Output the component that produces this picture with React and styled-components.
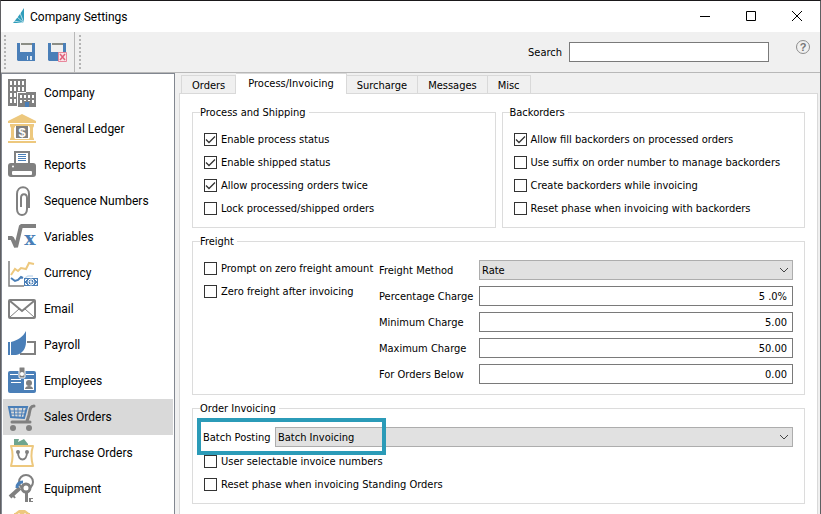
import React from 'react'
import styled, { createGlobalStyle, css } from 'styled-components'

const GlobalStyle = createGlobalStyle`
  * {
    box-sizing: border-box;
  }
  body {
    margin: 0;
    overflow: hidden;
    color: #000;
    font: 11px/15px 'DejaVu Sans Condensed', 'DejaVu Sans', sans-serif;
  }
  input, select, button {
    font: inherit;
    color: inherit;
    margin: 0;
  }
  label, legend {
    white-space: nowrap;
  }
`

const uiFont = css`
  font-family: Roboto, 'Noto Sans', sans-serif;
  font-size: 12px;
  line-height: 16px;
`

const Window = styled.div`
  display: flex;
  flex-direction: column;
  height: 100vh;
  background: #f0f0f0;
  border: 1px solid #5f5f62;
  border-top-color: #1a181a;
  border-bottom: 0;
`

const TitleBar = styled.header`
  ${uiFont}
  display: flex;
  flex: none;
  align-items: center;
  gap: 4px;
  height: 31px;
  padding-left: 12px;
  background: #fff;

  h1 {
    flex: 1;
    margin: 0;
    font-size: 12px;
    font-weight: 400;
  }
`

const Controls = styled.div`
  display: flex;
`

const ControlButton = styled.button`
  display: grid;
  place-items: center;
  width: 46px;
  height: 28px;
  padding: 0;
  border: 0;
  background: none;
`

const ToolBar = styled.div`
  display: flex;
  flex: none;
  align-items: stretch;
  height: 41px;
  border-bottom: 1px solid #b8b8b8;
`

const ToolGroup = styled.div`
  display: flex;
  align-items: center;
  gap: 11px;
  padding: 0 6px 0 3px;
  border-right: 1px solid #b8b8b8;
`

const Grip = styled.span`
  align-self: center;
  width: 2px;
  height: 34px;
  background: repeating-linear-gradient(#b4b4b4 0 2px, transparent 2px 4px);
`

const ToolButton = styled.button`
  display: flex;
  width: 20px;
  padding: 0;
  border: 0;
  background: none;
`

const SearchArea = styled.div`
  display: flex;
  flex: 1;
  align-items: center;
  justify-content: flex-end;
  gap: 7px;
  padding: 0 9px 0 4px;

  ${Grip} {
    margin-right: auto;
  }
`

const HelpButton = styled(ToolButton)`
  align-self: flex-start;
  width: 16px;
  margin: 7px 0 0 19px;
`

const fieldBox = css`
  height: 20px;
  border: 1px solid #7a7a7a;
  border-radius: 0;
  background: #fff;
`

const SearchInput = styled.input`
  ${fieldBox}
  width: 200px;
`

const Main = styled.div`
  display: flex;
  flex: 1;
  gap: 4px;
  min-height: 0;
`

const SideBar = styled.nav`
  ${uiFont}
  flex: none;
  width: 174px;
  padding: 1px 1px 0;
  overflow: hidden;
  background: #fff;
  border: 1px solid #828790;
  border-bottom: 0;
`

const SideItem = styled.a`
  display: flex;
  align-items: center;
  gap: 7px;
  height: 36px;
  padding-left: 4px;
  color: #000;
  text-decoration: none;
  background: ${props => (props.$selected ? '#d9d9d9' : 'none')};

  svg {
    flex: none;
    overflow: visible;
  }
`

const Content = styled.main`
  display: flex;
  flex: 1;
  flex-direction: column;
  min-width: 0;
  margin-right: 2px;
`

const TabList = styled.div`
  display: flex;
  flex: none;
  align-items: flex-end;
  height: 20px;
  padding-left: 2px;
`

const Tab = styled.button`
  height: 18px;
  padding: 1px 10px 0;
  border: 1px solid #d9d9d9;
  border-bottom: 0;
  border-left-width: ${props => (props.$first ? '1px' : 0)};
  background: #f0f0f0;

  &[aria-selected='true'] {
    z-index: 1;
    height: 21px;
    margin-bottom: -1px;
    padding: 0 12px 1px;
    background: #fff;
  }
`

const Panel = styled.div`
  display: flex;
  flex: 1;
  flex-direction: column;
  gap: 6px;
  min-height: 0;
  padding: 11px 12px 0;
  overflow: hidden;
  background: #fff;
  border: 1px solid #d9d9d9;
  border-bottom: 0;
`

const Columns = styled.div`
  display: grid;
  grid-template-columns: 1fr 1fr;
  gap: 6px;
`

const Group = styled.fieldset`
  min-width: 0;
  margin: 0;
  padding: 11px 11px 10px;
  border: 1px solid #dcdcdc;

  legend {
    height: 15px;
    margin-left: -4px;
    padding: 0 3px 0 0;
  }
`

const CheckList = styled.div`
  display: flex;
  flex-direction: column;
  gap: 8px;
  padding: 1px 0;
`

const CheckLabel = styled.label`
  display: flex;
  align-items: center;
  gap: 4px;
`

const Box = styled.span`
  position: relative;
  display: flex;

  input {
    appearance: none;
    width: 13px;
    height: 13px;
    border: 1px solid #333;
    background: #fff;
  }
  svg {
    position: absolute;
    inset: 0;
    visibility: hidden;
    pointer-events: none;
  }
  input:checked + svg {
    visibility: visible;
  }
`

const FreightLayout = styled.div`
  display: grid;
  grid-template-columns: 169px 1fr;
  gap: 6px;
  align-items: start;
`

const FormGrid = styled.div`
  display: grid;
  grid-template-columns: 94px 1fr;
  gap: 6px;
  align-items: center;
`

const NumberInput = styled.input`
  ${fieldBox}
  width: 100%;
  padding: 1px 5px 0;
  text-align: right;
`

const SelectBox = styled.span`
  position: relative;
  display: flex;

  select {
    appearance: none;
    width: 100%;
    height: 20px;
    padding: 1px 2px 0;
    border: 1px solid #adadad;
    border-radius: 0;
    background: #e1e1e1;
  }
  svg {
    position: absolute;
    top: 7px;
    right: 4px;
    pointer-events: none;
  }
`

const BatchRow = styled.div`
  position: relative;
  display: grid;
  grid-template-columns: 67px 1fr;
  gap: 5px;
  align-items: center;
  margin: 0 0 6px -1px;
`

// callout frame drawn over the batch posting row
const Highlight = styled.span`
  position: absolute;
  top: -9px;
  left: -6px;
  width: 189px;
  height: 37px;
  border: 4px solid #2b9bb8;
  pointer-events: none;
`

const GRAY = '#808080'
const BLUE = '#4a7fb8'
const GOLD = '#edc87e'

const Icon = ({ children }) => (
  <svg width="30" height="30" viewBox="0 0 30 30" fill="none" aria-hidden="true">
    {children}
  </svg>
)

const CompanyIcon = () => (
  <Icon>
    <path fill={GRAY} d="M1 1h18v13h10v15H10V28H1z" />
    <path
      fill="#fff"
      d="M3 3h2v4H3zM7 3h2v4H7zM11 3h2v4h-2zM15 3h2v4h-2zM3 9h2v4H3zM7 9h2v4H7zM11 9h2v4h-2zM15 9h2v4h-2zM3 15h2v4H3zM7 15h2v4H7zM3 21h2v4H3zM7 21h2v4H7zM10 14h9v1h-8v14h-1z"
    />
    <path
      fill="#fff"
      d="M13 17h2v3h-2zM17 17h2v3h-2zM21 17h2v3h-2zM25 17h2v3h-2zM13 22h2v3h-2zM25 22h2v3h-2zM17 22h2v1h-2zM21 22h2v1h-2z"
    />
    <path fill={BLUE} d="M18 24h4v5h-4z" />
  </Icon>
)

const LedgerIcon = () => (
  <Icon>
    <path
      fill={GOLD}
      d="M15 0l14 7v2H1V7zM3 10h24v2H3zM3 12h5v1l-1 1v9l1 2H3l1-2v-9zM22 12h5l-1 2v9l1 2h-5l1-2v-9zM3 25h24v1H3zM1 27h28v2H1z"
    />
    <path fill={GRAY} d="M9 12h12v12H9z" />
    <text x="15" y="23" fill="#fff" fontFamily="Liberation Sans" fontSize="13" fontWeight="700" textAnchor="middle">
      $
    </text>
  </Icon>
)

const ReportsIcon = () => (
  <Icon>
    <path stroke={GRAY} strokeWidth="2" d="M8 13V2h14v11" />
    <path stroke={BLUE} d="M11 4.500h8M11 6.500h8M11 8.500h8M11 10.500h8" />
    <rect x="1" y="13" width="28" height="14" rx="3" fill={GRAY} />
    <rect x="5" y="21" width="20" height="4" rx="1" fill="#fff" />
    <circle cx="6" cy="16.500" r="1" fill="#fff" />
  </Icon>
)

const ClipIcon = () => (
  <Icon>
    <path
      stroke={GRAY}
      strokeWidth="2"
      d="M22 22V8c0-9-12-9-12 0v15c0 8 10 8 10 0V12c0-5-6-5-6 0v9"
    />
  </Icon>
)

const VariablesIcon = () => (
  <Icon>
    <path stroke={GRAY} strokeWidth="4" strokeLinejoin="bevel" d="M1 16h4l4 9 5-21h15" />
    <text x="23" y="23" fill={BLUE} fontFamily="DejaVu Serif" fontSize="19" fontWeight="700" textAnchor="middle">
      x
    </text>
  </Icon>
)

const CurrencyIcon = () => (
  <Icon>
    <path stroke={GRAY} strokeWidth="1.500" d="M2 3v25h15" />
    <path stroke={GOLD} strokeWidth="2" d="M4 17l4-6 3 2 3-3 5 1 3-6 5 1" />
    <path stroke={BLUE} strokeWidth="2" d="M4 20l4 3 3-1 3-3 2 1" />
    <path stroke="#c9dcee" strokeWidth="1.500" d="M18 20l3-2h5" />
    <path fill={BLUE} d="M17 20h14v8H17z" />
    <path stroke="#fff" d="M20 21.500h-1.500v1.500M28 21.500h1.500v1.500M20 26.500h-1.500V25M28 26.500h1.500V25" />
    <circle cx="24" cy="24" r="3" stroke="#fff" />
    <path stroke="#fff" d="M25 23h-2v1h2v1h-2" />
  </Icon>
)

const EmailIcon = () => (
  <Icon>
    <rect x="2" y="6" width="26" height="18" rx="1" stroke={GRAY} strokeWidth="2" />
    <path stroke={GRAY} strokeWidth="2" d="M3 7l12 10L27 7" />
    <path stroke={GRAY} d="M3 23l9-8M27 23l-9-8" />
  </Icon>
)

const PayrollIcon = () => (
  <Icon>
    <path stroke={GRAY} strokeWidth="2" d="M20 12h8v12H13" />
    <path fill={BLUE} d="M1 12h2v13H1zM4 12c7-2 12-5 15-11v11c0 7-4 12-10 13H4z" />
  </Icon>
)

const EmployeesIcon = () => (
  <Icon>
    <rect x="1" y="5" width="28" height="22" rx="2" fill={BLUE} />
    <path fill="#fff" d="M3 8h8v1H3zM19 8h8v1h-8zM4 13h10v1H4zM4 16h10v1H4zM17 13h10v11H17z" />
    <rect x="12" y="1" width="6" height="11" rx="1" fill={GRAY} stroke="#fff" />
    <circle cx="15" cy="8" r="2" fill="#fff" />
    <circle cx="22" cy="17" r="3" fill={GRAY} />
    <path fill={GRAY} d="M18 23c0-4 8-4 8 0z" />
  </Icon>
)

const CartIcon = () => (
  <Icon>
    <path stroke={BLUE} strokeWidth="2" d="M2 5h18l-3 11-13-1z" />
    <path stroke={BLUE} d="M7 5l1 11M11 5v11M16 5l-2 11M3 9h16M3 12h15" />
    <path stroke={GRAY} strokeWidth="3" strokeLinecap="round" d="M27 4c-4 0-4 4-5 9l-2 6M5 20h18" />
    <circle cx="6" cy="26" r="3" fill={GRAY} />
    <circle cx="22" cy="26" r="3" fill={GRAY} />
  </Icon>
)

const PurchaseIcon = () => (
  <Icon>
    <path fill="#6fa58f" d="M7 1h5l-1 3 6-3 4 5v2H7z" />
    <path stroke={GOLD} strokeWidth="2" strokeLinejoin="round" d="M4 8h22c-2 6-2 13 0 20H4c2-7 2-14 0-20z" />
    <path stroke={GRAY} strokeWidth="2" d="M11 14c0 10 9 10 9 0" />
    <circle cx="11" cy="14" r="2" fill={GRAY} />
    <circle cx="20" cy="14" r="2" fill={GRAY} />
  </Icon>
)

const EquipmentIcon = () => (
  <Icon>
    <circle cx="19" cy="8" r="7" stroke={GRAY} strokeWidth="2" />
    <path stroke={GRAY} strokeWidth="4" d="M13 14L3 23" />
    <path stroke={GRAY} strokeWidth="2" d="M5 20l3 4" />
    <path stroke={BLUE} strokeWidth="3" d="M10 14c0-4 2-6 6-6" />
    <circle cx="19" cy="14" r="4" stroke={GRAY} strokeWidth="3" fill="#fff" />
    <path fill={GRAY} d="M18 17h3v11h-3zM22 24h4v1h-2v2h2v1h-4z" />
  </Icon>
)

const GearIcon = () => (
  <Icon>
    <path fill={GOLD} d="M12 0h6l4 3h1v27H7V3h1z" />
    <path stroke="#fff" d="M12 3v4M18 3v4" />
  </Icon>
)

const LogoIcon = () => (
  <svg width="13" height="17" viewBox="0 0 13 17" aria-hidden="true">
    <path fill="#2f9dbb" d="M11 0v15H0l4-5 3-4z" />
    <path stroke="#fff" fill="none" strokeWidth=".8" d="M11 15L7 5M11 15L4 9M11 15L1 13" opacity=".8" />
  </svg>
)

const SaveIcon = ({ cancel }) => (
  <svg width="20" height="20" viewBox="0 0 20 20" aria-hidden="true">
    <path fill={BLUE} d="M0 1h18v18H1l-1-1z" />
    <path fill="#f0f0f0" d="M3 1h12v9H3z" />
    <path fill="#8b8d85" d="M4 1h11v2H4z" />
    <path fill="#dfe8f1" d="M10 14h5v4h-5z" />
    <path fill={BLUE} d="M11 14h2v4h-2z" />
    {cancel && (
      <g fill="none">
        <path fill="#f8e4e8" stroke="#e8879b" d="M10.500 10.500h8v9h-8z" />
        <path stroke="#e0607c" strokeWidth="1.500" d="M12 12l5 6M17 12l-5 6" />
      </g>
    )}
  </svg>
)

const HelpIcon = () => (
  <svg width="16" height="16" viewBox="0 0 16 16" aria-hidden="true">
    <circle cx="8" cy="8" r="6.500" fill="none" stroke="#8c8c8c" />
    <text x="8" y="12" fill="#757575" fontFamily="Liberation Sans" fontSize="11" fontWeight="700" textAnchor="middle">
      ?
    </text>
  </svg>
)

const sections = [
  ['Company', CompanyIcon],
  ['General Ledger', LedgerIcon],
  ['Reports', ReportsIcon],
  ['Sequence Numbers', ClipIcon],
  ['Variables', VariablesIcon],
  ['Currency', CurrencyIcon],
  ['Email', EmailIcon],
  ['Payroll', PayrollIcon],
  ['Employees', EmployeesIcon],
  ['Sales Orders', CartIcon],
  ['Purchase Orders', PurchaseIcon],
  ['Equipment', EquipmentIcon],
  ['', GearIcon],
]

const tabs = ['Orders', 'Process/Invoicing', 'Surcharge', 'Messages', 'Misc']

const charges = [
  ['percentage', 'Percentage Charge', '5 .0%'],
  ['minimum', 'Minimum Charge', '5.00'],
  ['maximum', 'Maximum Charge', '50.00'],
  ['below', 'For Orders Below', '0.00'],
]

const Check = ({ label, checked }) => (
  <CheckLabel>
    <Box>
      <input type="checkbox" defaultChecked={checked} />
      <svg width="13" height="13" viewBox="0 0 13 13" fill="none" aria-hidden="true">
        <path stroke="#333" strokeWidth="1.300" d="M2 6.500l3 3 6-6" />
      </svg>
    </Box>
    {label}
  </CheckLabel>
)

const Select = ({ id, value }) => (
  <SelectBox>
    <select id={id} defaultValue={value}>
      <option>{value}</option>
    </select>
    <svg width="10" height="7" viewBox="0 0 10 7" fill="none" aria-hidden="true">
      <path stroke="#444" d="M1 1l4 4 4-4" />
    </svg>
  </SelectBox>
)

const App = () => {
  return (
    <Window>
      <GlobalStyle />
      <TitleBar>
        <LogoIcon />
        <h1>Company Settings</h1>
        <Controls>
          <ControlButton aria-label="Minimize">
            <svg width="11" height="11" stroke="#000">
              <path d="M0 5.500h10" />
            </svg>
          </ControlButton>
          <ControlButton aria-label="Maximize">
            <svg width="11" height="11" stroke="#000" fill="none">
              <path d="M.5.5h9v9h-9z" />
            </svg>
          </ControlButton>
          <ControlButton aria-label="Close">
            <svg width="11" height="11" stroke="#000">
              <path d="M0 0l10 10M10 0L0 10" />
            </svg>
          </ControlButton>
        </Controls>
      </TitleBar>
      <ToolBar>
        <ToolGroup>
          <Grip />
          <ToolButton aria-label="Save">
            <SaveIcon />
          </ToolButton>
          <ToolButton aria-label="Save and close">
            <SaveIcon cancel />
          </ToolButton>
        </ToolGroup>
        <SearchArea>
          <Grip />
          <label htmlFor="search">Search</label>
          <SearchInput id="search" type="text" />
          <HelpButton aria-label="Help">
            <HelpIcon />
          </HelpButton>
        </SearchArea>
      </ToolBar>
      <Main>
        <SideBar>
          {sections.map(([name, SectionIcon]) => (
            <SideItem key={name} href="#" $selected={name === 'Sales Orders'}>
              <SectionIcon />
              {name}
            </SideItem>
          ))}
        </SideBar>
        <Content>
          <TabList role="tablist">
            {tabs.map((tab, i) => (
              <Tab key={tab} role="tab" aria-selected={tab === 'Process/Invoicing'} $first={i === 0}>
                {tab}
              </Tab>
            ))}
          </TabList>
          <Panel role="tabpanel">
            <Columns>
              <Group>
                <legend>Process and Shipping</legend>
                <CheckList>
                  <Check label="Enable process status" checked />
                  <Check label="Enable shipped status" checked />
                  <Check label="Allow processing orders twice" checked />
                  <Check label="Lock processed/shipped orders" />
                </CheckList>
              </Group>
              <Group>
                <legend>Backorders</legend>
                <CheckList>
                  <Check label="Allow fill backorders on processed orders" checked />
                  <Check label="Use suffix on order number to manage backorders" />
                  <Check label="Create backorders while invoicing" />
                  <Check label="Reset phase when invoicing with backorders" />
                </CheckList>
              </Group>
            </Columns>
            <Group>
              <legend>Freight</legend>
              <FreightLayout>
                <CheckList>
                  <Check label="Prompt on zero freight amount" />
                  <Check label="Zero freight after invoicing" />
                </CheckList>
                <FormGrid>
                  <label htmlFor="method">Freight Method</label>
                  <Select id="method" value="Rate" />
                  {charges.map(([id, label, value]) => (
                    <React.Fragment key={id}>
                      <label htmlFor={id}>{label}</label>
                      <NumberInput id={id} type="text" defaultValue={value} />
                    </React.Fragment>
                  ))}
                </FormGrid>
              </FreightLayout>
            </Group>
            <Group>
              <legend>Order Invoicing</legend>
              <BatchRow>
                <label htmlFor="batch">Batch Posting</label>
                <Select id="batch" value="Batch Invoicing" />
                <Highlight />
              </BatchRow>
              <CheckList>
                <Check label="User selectable invoice numbers" />
                <Check label="Reset phase when invoicing Standing Orders" />
              </CheckList>
            </Group>
          </Panel>
        </Content>
      </Main>
    </Window>
  )
}

export default App
